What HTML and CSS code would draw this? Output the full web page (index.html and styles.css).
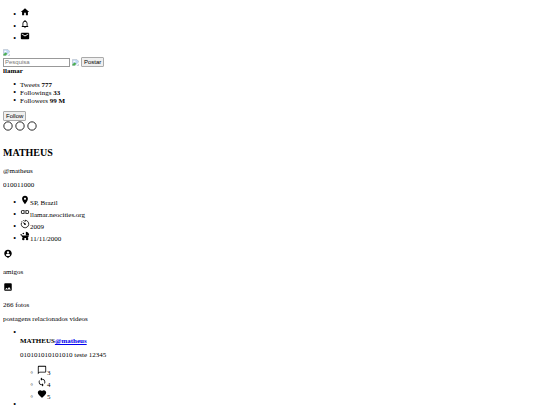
FILE: index.html
```html
<!DOCTYPE html>
<html lang="pt-br">
<head>
    <meta charset="UTF-8">
    <meta name="viewport" content="width=device-width, initial-scale=1.0">
    <title>llamar</title>
    <link rel="stylesheet" href="styles.css">
</head>
<body>
    <header>
        <nav>
            <ul class="list menu">
                <li><svg class="icon" viewBox="0 0 24 24"><path d="M10 20v-6h4v6h5v-8h3L12 3 2 12h3v8z"/></svg></li>
                <li><svg class="icon" viewBox="0 0 24 24"><path d="M12 22c1.100 0 2-.9 2-2h-4c0 1.100.9 2 2 2zm6-6v-5c0-3.070-1.630-5.640-4.500-6.320V4c0-.830-.670-1.500-1.500-1.500s-1.500.670-1.500 1.500v.680C7.640 5.360 6 7.920 6 11v5l-2 2v1h16v-1l-2-2zm-2 1H8v-6c0-2.480 1.510-4.500 4-4.500s4 2.020 4 4.500v6z"/></svg></li>
                <li><svg class="icon" viewBox="0 0 24 24"><path d="M20 4H4c-1.100 0-2 .9-2 2v12c0 1.100.9 2 2 2h16c1.100 0 2-.9 2-2V6c0-1.100-.9-2-2-2zm0 4l-8 5-8-5V6l8 5 8-5v2z"/></svg></li>
            </ul>
        </nav>
        <div class="logo">
            <svg class="thumb" viewBox="0 0 16 16"><path fill="#c3d9f5" stroke="#a5adb5" d="M1 1h10l4 4v10H1z"/><path fill="#fff" d="M3 6c0-2 3-3 4-1 2 0 2 2 1 2H3z"/><path fill="#4caf50" d="M1 15v-3l5-4 4 3-4 4z"/><path fill="#fff" d="M7 16l9-9v3l-6 6z"/></svg>
        </div>
        <form class="search">
            <input type="text" class="search-input" placeholder="Pesquisa" aria-label="Pesquisa">
            <svg class="thumb" viewBox="0 0 16 16"><path fill="#c3d9f5" stroke="#a5adb5" d="M1 1h10l4 4v10H1z"/><path fill="#fff" d="M3 6c0-2 3-3 4-1 2 0 2 2 1 2H3z"/><path fill="#4caf50" d="M1 15v-3l5-4 4 3-4 4z"/><path fill="#fff" d="M7 16l9-9v3l-6 6z"/></svg>
            <button type="button" class="btn">Postar</button>
        </form>
    </header>

    <section class="stats">
        <strong>llamar</strong>
        <ul class="list">
            <li>Tweets <strong>777</strong></li>
            <li>Followings <strong>33</strong></li>
            <li>Followers <strong>99 M</strong></li>
        </ul>
        <button type="button" class="btn">Follow</button>
        <div class="dots">
            <svg class="icon" viewBox="0 0 24 24"><circle class="ring" cx="12" cy="12" r="10"/></svg>
            <svg class="icon" viewBox="0 0 24 24"><circle class="ring" cx="12" cy="12" r="10"/></svg>
            <svg class="icon" viewBox="0 0 24 24"><circle class="ring" cx="12" cy="12" r="10"/></svg>
        </div>
    </section>

    <main>
        <section class="profile">
            <h1>MATHEUS</h1>
            <p>@matheus</p>
            <p>010011000</p>
            <ul class="list">
                <li><svg class="icon" viewBox="0 0 24 24"><path d="M12 2C8.130 2 5 5.130 5 9c0 5.250 7 13 7 13s7-7.750 7-13c0-3.870-3.130-7-7-7zm0 9.500c-1.380 0-2.500-1.120-2.500-2.500s1.120-2.500 2.500-2.500 2.500 1.120 2.500 2.500-1.120 2.500-2.500 2.500z"/></svg>SP, Brazil</li>
                <li><svg class="icon" viewBox="0 0 24 24"><path d="M3.900 12c0-1.710 1.390-3.100 3.100-3.100h4V7H7c-2.760 0-5 2.240-5 5s2.240 5 5 5h4v-1.900H7c-1.710 0-3.100-1.390-3.100-3.100zM8 13h8v-2H8v2zm9-6h-4v1.900h4c1.710 0 3.100 1.390 3.100 3.100s-1.390 3.100-3.100 3.100h-4V17h4c2.760 0 5-2.240 5-5s-2.240-5-5-5z"/></svg>llamar.neocities.org</li>
                <li><svg class="icon" viewBox="0 0 24 24"><path d="M12 7V3a9 9 0 1 1-8.500 6" fill="none" stroke="#000" stroke-width="2"/><path d="M7 7l6.500 3.500a2 2 0 1 1-3 3z"/><path d="M3 6h3v2H3zM7 3h2v2H7z"/></svg>2009</li>
                <li><svg class="icon" viewBox="0 0 24 24"><path d="M14 2v8h8c0-4.420-3.580-8-8-8zM1 8h3l2 3h15c0 3-1 5-3 6H7c-2-2-3-4-4-7H1z"/><circle cx="8" cy="19" r="3"/><circle cx="17" cy="19" r="3"/><circle cx="8" cy="6" r="2"/></svg>11/11/2000</li>
            </ul>
        </section>

        <section class="about">
            <svg class="icon" viewBox="0 0 24 24"><path d="M12 2C7 2 3 6 3 11c0 4 3 8 7 8.700L12 22l2-2.300c4-.7 7-4.700 7-8.700 0-5-4-9-9-9zm0 3.300c1.490 0 2.700 1.210 2.700 2.700s-1.210 2.700-2.700 2.700S9.300 9.490 9.300 8s1.210-2.700 2.700-2.700zM12 17c-2.250 0-4.220-1.150-5.370-2.900.03-1.780 3.580-2.750 5.370-2.750s5.350.97 5.370 2.750C16.220 15.850 14.250 17 12 17z"/></svg>
            <p>amigos</p>
            <svg class="icon" viewBox="0 0 24 24"><path d="M21 19V5c0-1.100-.9-2-2-2H5c-1.100 0-2 .9-2 2v14c0 1.100.9 2 2 2h14c1.100 0 2-.9 2-2zM8.500 13.500l2.500 3.010L14.500 12l4.500 6H5l3.500-4.500z"/></svg>
            <p>266 fotos</p>
            <p>postagens relacionados videos</p>
        </section>

        <ul class="list posts">
            <li>
                <br>
                <strong>MATHEUS<a href="#">@matheus</a></strong>
                <p>010101010101010 teste 12345</p>
                <ul class="list">
                    <li><svg class="icon" viewBox="0 0 24 24"><path d="M20 2H4c-1.100 0-2 .9-2 2v18l4-4h14c1.100 0 2-.9 2-2V4c0-1.100-.9-2-2-2zm0 14H6l-2 2V4h16v12z"/></svg>3</li>
                    <li><svg class="icon" viewBox="0 0 24 24"><path d="M12 4V1L8 5l4 4V6c3.310 0 6 2.690 6 6 0 1.010-.250 1.970-.7 2.800l1.460 1.460C19.540 15.030 20 13.570 20 12c0-4.420-3.580-8-8-8zm0 14c-3.310 0-6-2.690-6-6 0-1.010.250-1.970.7-2.800L5.240 7.740C4.460 8.970 4 10.430 4 12c0 4.420 3.580 8 8 8v3l4-4-4-4v3z"/></svg>4</li>
                    <li><svg class="icon" viewBox="0 0 24 24"><path d="M12 21.350l-1.450-1.320C5.400 15.360 2 12.280 2 8.500 2 5.420 4.420 3 7.500 3c1.740 0 3.410.810 4.500 2.090C13.090 3.810 14.760 3 16.500 3 19.580 3 22 5.420 22 8.500c0 3.780-3.400 6.860-8.550 11.540L12 21.350z"/></svg>5</li>
                </ul>
            </li>
            <li><br></li>
        </ul>
    </main>
</body>
</html>
```
FILE: styles.css
```css
body {
    margin: 7px 3px 0;
    background: #fff;
    color: #000;
    font-family: "Liberation Serif", "Times New Roman", serif;
    font-size: 7px;
    line-height: 8px;
}

.list {
    margin: 6px 0;
    padding-left: 17px;
    list-style-type: "•\00a0\00a0";
}

.list li::marker {
    font-size: 8px;
}

.menu {
    margin-top: 0;
}

.icon {
    width: 10px;
    height: 10px;
}

.thumb {
    width: 7px;
    height: 7px;
}

.ring {
    fill: none;
    stroke: #000;
    stroke-width: 2;
}

.logo {
    display: flex;
    height: 8px;
}

.search {
    display: flex;
    align-items: center;
    gap: 2px;
}

.search-input {
    width: 67px;
    height: 9px;
    box-sizing: border-box;
    padding: 0 1px;
    border: 1px solid #999;
    font-family: "Liberation Sans", Arial, sans-serif;
    font-size: 6px;
}

.search-input::placeholder {
    color: #777;
}

.btn {
    height: 10px;
    padding: 0 2px;
    border: 1px solid #aaa;
    border-radius: 1px;
    background: #efefef;
    color: #000;
    font-family: "Liberation Sans", Arial, sans-serif;
    font-size: 6px;
    line-height: 8px;
}

.stats .btn {
    display: block;
}

.dots {
    display: flex;
    gap: 2px;
}

h1 {
    margin: 16px 0 8px;
    font-size: 10px;
    line-height: 12px;
}

p {
    margin: 6px 0;
}

.about .icon {
    display: block;
    margin-bottom: 9px;
}

.posts {
    margin-bottom: 0;
}

.posts .list {
    margin: 0;
    list-style-type: "◦\00a0\00a0";
}
```
